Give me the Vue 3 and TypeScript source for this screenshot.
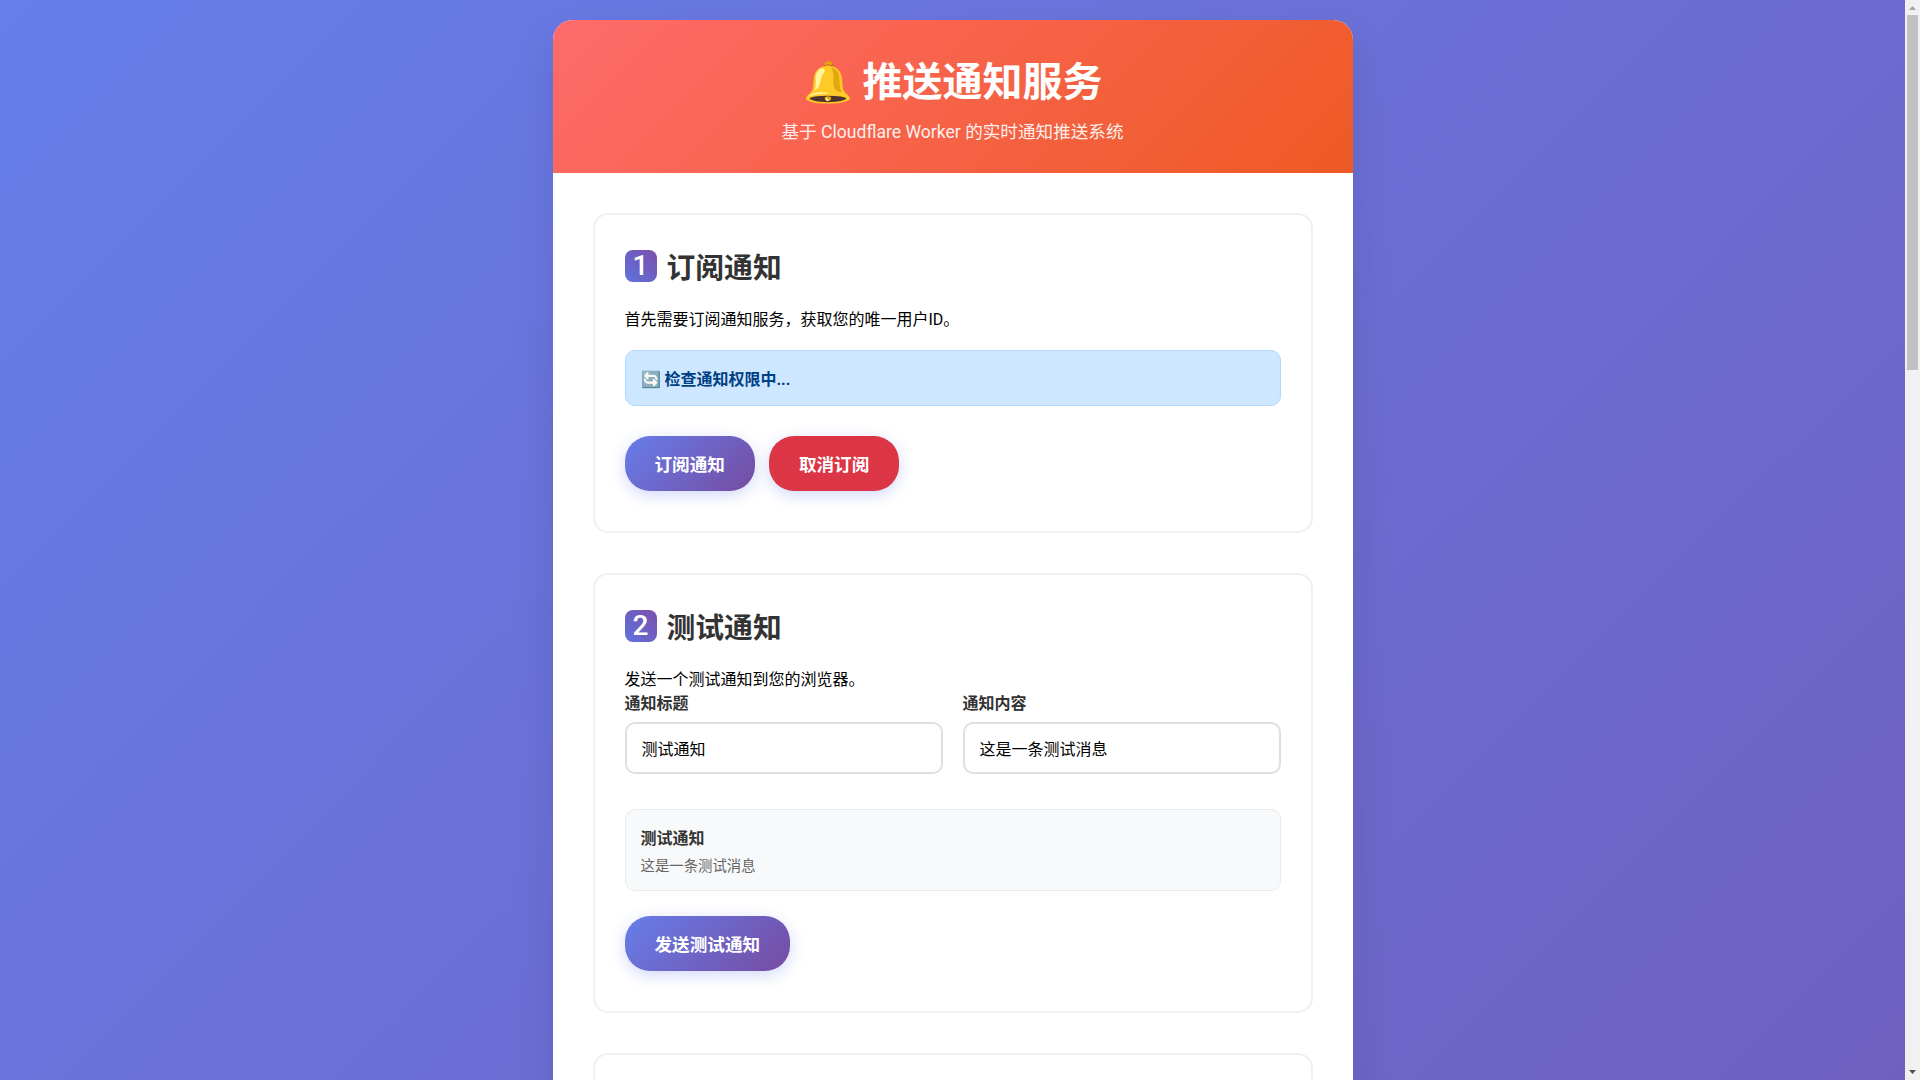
<script setup lang="ts">
import { ref } from 'vue'
const title = ref('测试通知')
const body = ref('这是一条测试消息')
</script>

<template>
  <div class="container">
    <header class="header">
      <h1>🔔 推送通知服务</h1>
      <p>基于 Cloudflare Worker 的实时通知推送系统</p>
    </header>
    <main class="content">
      <section class="section">
        <h2><span class="num">1</span>订阅通知</h2>
        <p>首先需要订阅通知服务，获取您的唯一用户ID。</p>
        <div class="status">🔄 检查通知权限中...</div>
        <div class="actions">
          <button class="btn" type="button">订阅通知</button>
          <button class="btn btn-danger" type="button">取消订阅</button>
        </div>
      </section>
      <section class="section">
        <h2><span class="num">2</span>测试通知</h2>
        <p>发送一个测试通知到您的浏览器。</p>
        <div class="form-row">
          <div class="form-group">
            <label for="t">通知标题</label>
            <input id="t" v-model="title" type="text" />
          </div>
          <div class="form-group">
            <label for="b">通知内容</label>
            <input id="b" v-model="body" type="text" />
          </div>
        </div>
        <div class="preview">
          <div class="preview-title">{{ title }}</div>
          <div class="preview-body">{{ body }}</div>
        </div>
        <div class="actions">
          <button class="btn" type="button">发送测试通知</button>
        </div>
      </section>
      <section class="section section-rest"></section>
    </main>
  </div>
  <div class="scrollbar" aria-hidden="true">
    <svg class="arrow" width="15" height="15" viewBox="0 0 15 15"><path d="M7.5 6L11 10H4z" fill="#a3a3a3" /></svg>
    <div class="track"><div class="thumb"></div></div>
    <svg class="arrow" width="15" height="15" viewBox="0 0 15 15"><path d="M4 5H11L7.5 9z" fill="#505050" /></svg>
  </div>
</template>

<style>
html, body { margin: 0; }
body {
  min-height: 100vh;
  padding: 20px 35px 20px 20px;
  box-sizing: border-box;
  background: linear-gradient(135deg, #667eea 0%, #764ba2 100%);
  font-family: Roboto, "Noto Sans CJK SC", sans-serif;
}
</style>

<style scoped>
.scrollbar {
  position: fixed;
  top: 0;
  right: 0;
  display: flex;
  flex-direction: column;
  width: 15px;
  height: 100vh;
  background: #f1f1f1;
}
.arrow { display: block; flex: none; }
.track { flex: 1; }
.thumb { width: 11px; height: 355px; margin: 0 2px; background: #c1c1c1; }
.container {
  max-width: 800px;
  margin: 0 auto;
  background: #fff;
  border-radius: 20px;
  box-shadow: 0 20px 40px rgba(0, 0, 0, 0.1);
  overflow: hidden;
}
.header {
  background: linear-gradient(135deg, #ff6b6b, #ee5a24);
  color: #fff;
  padding: 30px;
  text-align: center;
}
.header h1 { margin: 0 0 10px; font-size: 40px; font-weight: 700; }
.header p { margin: 0; font-size: 17.6px; opacity: 0.9; }
.content { padding: 40px; }
.section {
  margin-bottom: 40px;
  padding: 30px;
  border: 2px solid #f0f0f0;
  border-radius: 15px;
}
.section-rest { box-sizing: border-box; min-height: 2081px; margin-bottom: 0; }
h2 {
  display: flex;
  align-items: center;
  gap: 10px;
  margin: 0 0 20px;
  font-size: 28.8px;
  font-weight: 700;
  color: #333;
}
.num {
  display: flex;
  align-items: center;
  justify-content: center;
  width: 32px;
  height: 32px;
  border-radius: 8px;
  background: linear-gradient(45deg, #5f72dc, #7a50ab);
  color: #fff;
  font-size: 28px;
  font-weight: 500;
  font-family: Roboto, sans-serif;
}
.section p { margin: 0; font-size: 16px; color: #000; }
.status {
  margin: 20px 0;
  padding: 15px;
  border: 1px solid #b3d7ff;
  border-radius: 10px;
  background: #cce7ff;
  color: #004085;
  font-weight: 700;
}
.actions { display: flex; gap: 14px; padding: 10px 0; }
.btn {
  padding: 15px 30px;
  border: 0;
  border-radius: 25px;
  background: linear-gradient(135deg, #667eea, #764ba2);
  box-shadow: 0 4px 15px rgba(102, 126, 234, 0.3);
  color: #fff;
  font: 700 17.6px Roboto, "Noto Sans CJK SC", sans-serif;
}
.btn-danger { background: #dc3545; }
.form-row { display: grid; grid-template-columns: 1fr 1fr; gap: 20px; }
.form-group { margin-bottom: 20px; }
label { display: block; margin-bottom: 8px; color: #333; font-weight: 700; }
input {
  width: 100%;
  height: 52px;
  box-sizing: border-box;
  padding: 15px;
  border: 2px solid #e0e0e0;
  border-radius: 10px;
  font: 16px Roboto, "Noto Sans CJK SC", sans-serif;
  color: #000;
}
.preview {
  margin: 15px 0;
  padding: 15px;
  border: 1px solid #e9ecef;
  border-radius: 10px;
  background: #f8f9fa;
}
.preview-title { margin-bottom: 5px; color: #333; font-weight: 700; }
.preview-body { color: #666; font-size: 14.4px; }
</style>
